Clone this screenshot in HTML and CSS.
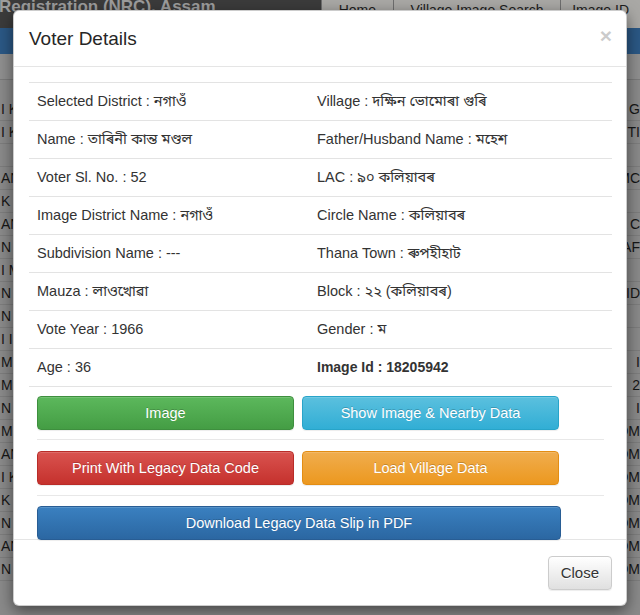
FILE: index.html
```html
<!DOCTYPE html>
<html lang="en">
<head>
<meta charset="utf-8">
<title>Voter Details</title>
<link rel="stylesheet" href="styles.css">
</head>
<body>
<div class="page">
  <header class="topbar">
    <div class="brand">Registration (NRC), Assam</div>
    <nav class="tabs">
      <span class="tab tab-home">Home</span>
      <span class="tab tab-village">Village Image Search</span>
      <span class="tab tab-id">Image ID</span>
    </nav>
  </header>
  <div class="bluebar"></div>
  <div class="subbar"></div>
  <div class="bg-rows">
    <div class="bg-row"><span>I K</span><span>G</span></div>
    <div class="bg-row"><span>I K</span><span>TI</span></div>
    <div class="bg-row"><span></span><span></span></div>
    <div class="bg-row"><span>AN</span><span>MC</span></div>
    <div class="bg-row"><span>K</span><span></span></div>
    <div class="bg-row"><span>AN</span><span>A C</span></div>
    <div class="bg-row"><span>N</span><span>AF</span></div>
    <div class="bg-row"><span>I M</span><span></span></div>
    <div class="bg-row"><span>N</span><span>ID</span></div>
    <div class="bg-row"><span>N</span><span></span></div>
    <div class="bg-row"><span>I I</span><span></span></div>
    <div class="bg-row"><span>M</span><span>I</span></div>
    <div class="bg-row"><span>M</span><span>2</span></div>
    <div class="bg-row"><span>N</span><span>I</span></div>
    <div class="bg-row"><span>M</span><span>OM</span></div>
    <div class="bg-row"><span>AN</span><span>OM</span></div>
    <div class="bg-row"><span>I K</span><span>OM</span></div>
    <div class="bg-row"><span>K</span><span>OM</span></div>
    <div class="bg-row"><span>N</span><span>OM</span></div>
    <div class="bg-row"><span>AN</span><span>OM</span></div>
    <div class="bg-row"><span>N</span><span>OM</span></div>
  </div>
</div>

<div class="modal">
  <div class="modal-header">
    <h4 class="modal-title">Voter Details</h4>
    <span class="close">&times;</span>
  </div>
  <div class="modal-body">
    <div class="details">
      <div class="row"><div class="cell">Selected District : নগাওঁ</div><div class="cell">Village : দক্ষিন ভোমোৰা গুৰি</div></div>
      <div class="row"><div class="cell">Name : তাৰিনী কান্ত মণ্ডল</div><div class="cell">Father/Husband Name : মহেশ</div></div>
      <div class="row"><div class="cell">Voter Sl. No. : 52</div><div class="cell">LAC : ৯০ কলিয়াবৰ</div></div>
      <div class="row"><div class="cell">Image District Name : নগাওঁ</div><div class="cell">Circle Name : কলিয়াবৰ</div></div>
      <div class="row"><div class="cell">Subdivision Name : ---</div><div class="cell">Thana Town : ৰুপহীহাট</div></div>
      <div class="row"><div class="cell">Mauza : লাওখোৱা</div><div class="cell">Block : ২২ (কলিয়াবৰ)</div></div>
      <div class="row"><div class="cell">Vote Year : 1966</div><div class="cell">Gender : ম</div></div>
      <div class="row"><div class="cell">Age : 36</div><div class="cell strong">Image Id : 18205942</div></div>
      <div class="actions">
        <div class="action-row first">
          <button class="btn btn-success">Image</button>
          <button class="btn btn-info">Show Image &amp; Nearby Data</button>
        </div>
        <div class="action-row second">
          <button class="btn btn-danger">Print With Legacy Data Code</button>
          <button class="btn btn-warning">Load Village Data</button>
        </div>
        <div class="action-row last">
          <button class="btn btn-primary btn-wide">Download Legacy Data Slip in PDF</button>
        </div>
      </div>
    </div>
  </div>
  <div class="modal-footer">
    <button class="btn btn-default">Close</button>
  </div>
</div>
</body>
</html>
```
FILE: styles.css
```css
* { box-sizing: border-box; }
html, body {
  margin: 0;
  width: 640px;
  height: 615px;
  overflow: hidden;
}
body {
  background: #8a8a8a;
  font-family: "Liberation Sans", "Noto Sans Bengali", "Lohit Bengali", "FreeSans", sans-serif;
  color: #333;
}

/* dimmed background page */
.page { width: 640px; }
.topbar {
  height: 28px;
  background: #3b3b3b;
  display: flex;
  justify-content: space-between;
  overflow: hidden;
}
.brand {
  color: #9d9d9d;
  font-weight: bold;
  font-size: 17px;
  line-height: 17px;
  margin-top: -2px;
  margin-left: -1px;
  white-space: nowrap;
}
.tabs { display: flex; width: 319px; }
.tab {
  background: #a9a8a5;
  color: #1d1d1d;
  font-size: 14px;
  padding: 2px 0 0;
  text-align: center;
  white-space: nowrap;
  border-left: 1px solid #6e6e6e;
}
.tab-home { width: 72px; }
.tab-village { width: 168px; }
.tab-id { width: 80px; }
.bluebar { height: 26px; background: #2b5885; }
.subbar {
  height: 26px;
  background: #8f8f8f;
  border-bottom: 1px solid #7a7a7a;
}
.bg-rows { padding-top: 18px; }
.bg-row {
  height: 23px;
  display: flex;
  justify-content: space-between;
  align-items: center;
  font-size: 14px;
  color: #161616;
  border-bottom: 1px solid #7d7d7d;
  padding: 0 0 0 1px;
}

/* modal */
.modal {
  position: absolute;
  left: 13px;
  top: 10px;
  width: 614px;
  background: #fff;
  border: 1px solid rgba(0, 0, 0, 0.2);
  border-radius: 6px;
  box-shadow: 0 5px 15px rgba(0, 0, 0, 0.5);
}
.modal-header {
  height: 56px;
  padding: 0 14px 0 15px;
  border-bottom: 1px solid #e5e5e5;
  display: flex;
  justify-content: space-between;
  align-items: center;
}
.modal-title {
  margin: 0;
  font-size: 19px;
  font-weight: normal;
  color: #262626;
  padding-top: 1px;
}
.close {
  font-size: 21px;
  font-weight: bold;
  color: #000;
  opacity: 0.2;
  line-height: 1;
  margin-top: -6px;
}
.modal-body { padding: 15px 14px 0 15px; }
.details { width: 583px; }
.row {
  display: grid;
  grid-template-columns: 280px 1fr;
  border-top: 1px solid #e3e3e3;
  height: 38px;
}
.cell {
  padding: 8px;
  font-size: 14.5px;
  line-height: 21px;
  white-space: nowrap;
}
.cell.strong { font-weight: bold; font-size: 14px; }
.actions {
  border-top: 1px solid #e3e3e3;
  padding: 0 8px;
}
.action-row {
  display: flex;
  gap: 8px;
  padding: 9px 0;
  border-bottom: 1px solid #e8e8e8;
}
.action-row.second { padding: 11px 0 10px; }
.action-row.last {
  border-bottom: none;
  padding: 10px 0 0;
  margin-bottom: -1px;
}

.btn {
  display: block;
  height: 34px;
  width: 257px;
  padding: 6px 12px;
  font-family: "Liberation Sans", sans-serif;
  font-size: 14.5px;
  line-height: 20px;
  color: #fff;
  border: 1px solid transparent;
  border-radius: 4px;
  text-shadow: 0 -1px 0 rgba(0, 0, 0, 0.2);
  box-shadow: inset 0 1px 0 rgba(255, 255, 255, 0.15), 0 1px 1px rgba(0, 0, 0, 0.075);
  text-align: center;
  white-space: nowrap;
}
.btn-wide { width: 524px; position: relative; }
.btn-success { background: linear-gradient(#5cb85c, #449d44); border-color: #3e8f3e; }
.btn-info { background: linear-gradient(#5bc0de, #31aed5); border-color: #28a4c9; }
.btn-danger { background: linear-gradient(#d9534f, #c5312d); border-color: #b92c28; }
.btn-warning { background: linear-gradient(#f0ad4e, #ec981f); border-color: #e38d13; }
.btn-primary { background: linear-gradient(#3a80c0, #2b67a2); border-color: #285d94; }
.btn-default {
  width: auto;
  color: #333;
  font-size: 15px;
  text-shadow: 0 1px 0 #fff;
  background: linear-gradient(#fff, #e0e0e0);
  border-color: #ccc;
}
.modal-footer {
  border-top: 1px solid #e5e5e5;
  padding: 16px 14px 15px 15px;
  display: flex;
  justify-content: flex-end;
}
```
